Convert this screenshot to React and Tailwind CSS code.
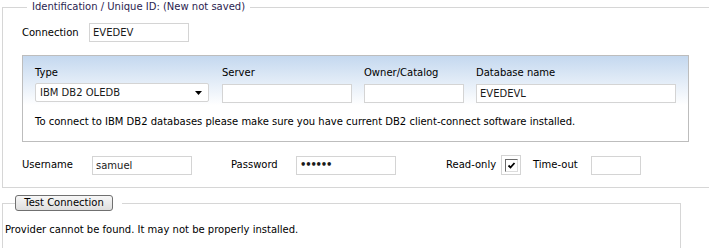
import React from 'react';

const inputCls =
  'h-[19px] border border-[#d4d4d4] bg-white px-[3px] text-[10px] text-[#1a1a1a] outline-none';

const Field = ({ label, width, value = '', className = '' }) => (
  <div className={`flex flex-col ${className}`}>
    <span className="leading-[14px] mb-[4px]">{label}</span>
    <input readOnly value={value} className={`${inputCls} ${width}`} />
  </div>
);

const App = () => {
  return (
    <div className="w-[709px] h-[248px] overflow-hidden bg-white pl-[2px] font-['DejaVu_Sans',sans-serif] text-[10px] leading-[14px] text-black">
      {/* identification block */}
      <fieldset className="w-[720px] border border-[#d6d6d6] m-0 p-0">
        <legend className="ml-[24px] px-[5px] leading-[14px] text-[#2a1d4f]">
          Identification / Unique ID: (New not saved)
        </legend>

        <div className="pl-[19px] pb-[12px]">
          <div className="flex items-center mt-[9px]">
            <span className="w-[67px]">Connection</span>
            <input readOnly value="EVEDEV" className={`${inputCls} w-[100px]`} />
          </div>

          <div className="mt-[13px] w-[667px] h-[87px] border border-[#bdbdbd] bg-[linear-gradient(to_bottom,#c4d8ef,#ffffff_58%)] pl-[12px] pt-[10px]">
            <div className="flex">
              <div className="flex flex-col">
                <span className="leading-[14px] mb-[3px]">Type</span>
                <div className="w-[174px] h-[19px] border border-[#d4d4d4] rounded-[2px] bg-white flex items-center justify-between pl-[4px] pr-[6px] text-[#1a1a1a]">
                  <span>IBM DB2 OLEDB</span>
                  <svg width="7" height="4" viewBox="0 0 7 4">
                    <path d="M0 0h7L3.5 4z" fill="#000" />
                  </svg>
                </div>
              </div>
              <Field label="Server" width="w-[130px]" className="ml-[13px]" />
              <Field label="Owner/Catalog" width="w-[100px]" className="ml-[12px]" />
              <Field label="Database name" width="w-[200px]" value="EVEDEVL" className="ml-[12px]" />
            </div>
            <p className="mt-[12px]">
              To connect to IBM DB2 databases please make sure you have current DB2 client-connect software installed.
            </p>
          </div>

          <div className="flex items-center mt-[13px]">
            <span className="w-[70px]">Username</span>
            <input readOnly value="samuel" className={`${inputCls} w-[100px]`} />
            <span className="ml-[39px] w-[65px]">Password</span>
            <div className={`${inputCls} w-[100px] flex items-center text-[#0b1a4a] font-bold tracking-[-1.2px]`}>
              ••••••
            </div>
            <span className="ml-[50px] w-[55px]">Read-only</span>
            <div className="w-[20px] h-[20px] border border-[#d4d4d4] flex items-center justify-center">
              <div className="w-[13px] h-[13px] border border-t-[#6b6b6b] border-l-[#6b6b6b] border-r-[#dcdcdc] border-b-[#dcdcdc] bg-white flex items-center justify-center">
                <svg width="9" height="9" viewBox="0 0 9 9">
                  <path d="M1.5 4.5l2 2L7.5 2" fill="none" stroke="#000" strokeWidth="1.8" />
                </svg>
              </div>
            </div>
            <span className="ml-[12px] w-[58px]">Time-out</span>
            <input readOnly value="" className={`${inputCls} w-[50px]`} />
          </div>
        </div>
      </fieldset>

      {/* test connection block */}
      <fieldset className="mt-[7px] w-[679px] h-[80px] border border-[#d6d6d6] m-0 p-0">
        <legend className="ml-[12px] pr-[9px]">
          <button className="w-[98px] h-[16px] border border-[#707070] rounded-[3px] bg-[linear-gradient(to_bottom,#f7f7f7,#dedede)] text-[10px] leading-[14px] text-black">
            Test Connection
          </button>
        </legend>
        <p className="pl-[2px] mt-[12px]">Provider cannot be found. It may not be properly installed.</p>
      </fieldset>
    </div>
  );
};

export default App;
